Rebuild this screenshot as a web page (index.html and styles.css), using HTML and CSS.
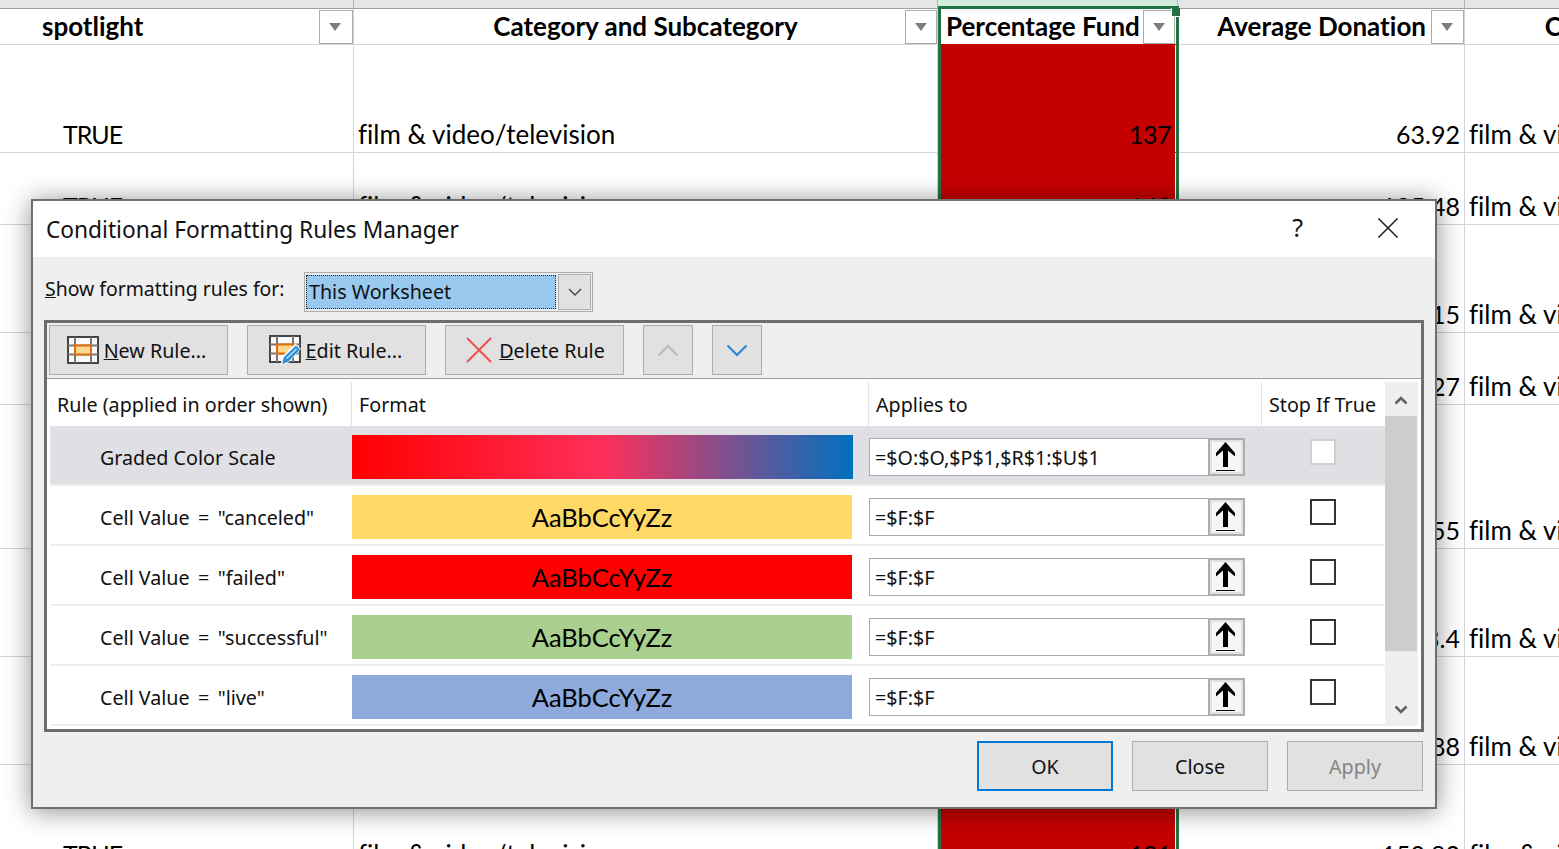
FILE: index.html
```html
<!DOCTYPE html>
<html lang="en">

<head>
    <meta charset="UTF-8">
    <title>Conditional Formatting Rules Manager</title>
    <link rel="stylesheet" href="styles.css">
</head>

<body>

    <!-- Hoja de fondo -->
    <div class="sheet">
        <div class="fila letras">
            <div class="celda"></div>
            <div class="celda"></div>
            <div class="celda letra-activa"></div>
            <div class="celda"></div>
            <div class="celda"></div>
        </div>
        <div class="fila cabecera">
            <div class="celda izq-spot">spotlight<span class="filtro"></span></div>
            <div class="celda centro">Category and Subcategory<span class="filtro filtro-cat"></span></div>
            <div class="celda izq-pct">Percentage Fund<span class="filtro filtro-pct"></span></div>
            <div class="celda der-avg">Average Donation<span class="filtro filtro-avg"></span></div>
            <div class="celda centro">Category</div>
        </div>
        <div class="fila h108">
            <div class="celda bool">TRUE</div><div class="celda texto">film &amp; video/television</div>
            <div class="celda pct">137</div><div class="celda num">63.92</div><div class="celda texto">film &amp; video</div>
        </div>
        <div class="fila h72">
            <div class="celda bool">TRUE</div><div class="celda texto">film &amp; video/television</div>
            <div class="celda pct">143</div><div class="celda num">185.48</div><div class="celda texto">film &amp; video</div>
        </div>
        <div class="fila h108">
            <div class="celda bool">TRUE</div><div class="celda texto">film &amp; video/television</div>
            <div class="celda pct">110</div><div class="celda num">15.15</div><div class="celda texto">film &amp; video</div>
        </div>
        <div class="fila h72">
            <div class="celda bool">TRUE</div><div class="celda texto">film &amp; video/television</div>
            <div class="celda pct">103</div><div class="celda num">66.27</div><div class="celda texto">film &amp; video</div>
        </div>
        <div class="fila h144">
            <div class="celda bool">TRUE</div><div class="celda texto">film &amp; video/television</div>
            <div class="celda pct">108</div><div class="celda num">47.55</div><div class="celda texto">film &amp; video</div>
        </div>
        <div class="fila h108">
            <div class="celda bool">TRUE</div><div class="celda texto">film &amp; video/television</div>
            <div class="celda pct">126</div><div class="celda num">73.4</div><div class="celda texto">film &amp; video</div>
        </div>
        <div class="fila h108">
            <div class="celda bool">TRUE</div><div class="celda texto">film &amp; video/television</div>
            <div class="celda pct">112</div><div class="celda num">95.88</div><div class="celda texto">film &amp; video</div>
        </div>
        <div class="fila h108">
            <div class="celda bool">TRUE</div><div class="celda texto">film &amp; video/television</div>
            <div class="celda pct">101</div><div class="celda num">150.82</div><div class="celda texto">film &amp; video</div>
        </div>
    </div>

    <!-- Columna seleccionada -->
    <div class="seleccion"><span class="tirador"></span></div>

    <!-- Dialogo -->
    <div class="dialogo">
        <div class="titulo">
            <span class="titulo-texto">Conditional Formatting Rules Manager</span>
            <span class="ayuda">?</span>
            <svg class="cerrar" width="22" height="22" viewBox="0 0 22 22"><path d="M1.5 1.5L20.5 20.5M20.5 1.5L1.5 20.5" stroke="#222" stroke-width="1.6" fill="none"/></svg>
        </div>

        <div class="opciones">
            <span class="etiqueta"><u>S</u>how formatting rules for:</span>
            <div class="combo">
                <div class="combo-valor">This Worksheet</div>
                <div class="combo-flecha">
                    <svg width="14" height="8" viewBox="0 0 14 8"><path d="M1 1L7 7L13 1" stroke="#444" stroke-width="1.4" fill="none"/></svg>
                </div>
            </div>
        </div>

        <div class="panel">
            <div class="barra">
                <button class="boton ancho nueva">
                    <svg width="32" height="28" viewBox="0 0 32 28">
                        <rect x="1" y="1" width="30" height="26" fill="#fafafa" stroke="#444" stroke-width="2"/>
                        <path d="M8 1V27M24 1V27M1 9.500H31M1 18.500H31" stroke="#777" stroke-width="2" fill="none"/>
                        <rect x="8" y="9.500" width="16" height="9" fill="#fbd98f" stroke="#e46c0a" stroke-width="2"/>
                    </svg>
                    <span><u>N</u>ew Rule...</span>
                </button>
                <button class="boton ancho">
                    <svg width="32" height="30" viewBox="0 0 32 30">
                        <rect x="1" y="1" width="30" height="26" fill="#fafafa" stroke="#444" stroke-width="2"/>
                        <path d="M8 1V27M24 1V27M1 9.500H31M1 18.500H31" stroke="#777" stroke-width="2" fill="none"/>
                        <rect x="8" y="9.500" width="16" height="9" fill="#fbd98f" stroke="#e46c0a" stroke-width="2"/>
                        <path d="M11.500 30L13.500 21L26.500 8.500L32 14L19.500 27.500Z" fill="#fff"/>
                        <path d="M13 29L15 22L27 10.500L31 14.500L19.500 26.500Z" fill="#2a8fd6"/>
                        <path d="M17.500 23.500L27.500 14" stroke="#bfe0f5" stroke-width="1.400"/>
                    </svg>
                    <span><u>E</u>dit Rule...</span>
                </button>
                <button class="boton ancho borrar">
                    <svg width="26" height="26" viewBox="0 0 26 26"><path d="M1 1L25 25M25 1L1 25" stroke="#ee4f4f" stroke-width="2" fill="none"/></svg>
                    <span><u>D</u>elete Rule</span>
                </button>
                <button class="boton corto">
                    <svg width="22" height="13" viewBox="0 0 22 13"><path d="M1.500 11.500L11 2L20.500 11.500" stroke="#bdbdbd" stroke-width="2.400" fill="none"/></svg>
                </button>
                <button class="boton corto">
                    <svg width="22" height="13" viewBox="0 0 22 13"><path d="M1.500 1.500L11 11L20.500 1.500" stroke="#2b88d8" stroke-width="2.200" fill="none"/></svg>
                </button>
            </div>

            <div class="tabla">
                <div class="lista">
                    <div class="encabezado">
                        <div class="col-rule">Rule (applied in order shown)</div>
                        <div class="col-sep">Format</div>
                        <div class="col-sep">Applies to</div>
                        <div class="col-sep">Stop If True</div>
                    </div>

                    <div class="regla activa">
                        <div class="regla-nombre">Graded Color Scale</div>
                        <div class="muestra grad"></div>
                        <div class="rango"><span class="rango-texto">=$O:$O,$P$1,$R$1:$U$1</span>
                            <span class="rango-boton"><svg width="19" height="29" viewBox="0 0 19 29"><path d="M9.500 0L19 11V14.500L12 8.500V25H7V8.500L0 14.500V11Z" fill="#000"/><rect y="28" width="19" height="1" fill="#000"/></svg></span>
                        </div>
                        <div class="marca marca-off"></div>
                    </div>
                    <div class="regla">
                        <div class="regla-nombre">Cell Value&#8201; = &#8201;"canceled"</div>
                        <div class="muestra amarillo">AaBbCcYyZz</div>
                        <div class="rango"><span class="rango-texto">=$F:$F</span>
                            <span class="rango-boton"><svg width="19" height="29" viewBox="0 0 19 29"><path d="M9.500 0L19 11V14.500L12 8.500V25H7V8.500L0 14.500V11Z" fill="#000"/><rect y="28" width="19" height="1" fill="#000"/></svg></span>
                        </div>
                        <div class="marca"></div>
                    </div>
                    <div class="regla">
                        <div class="regla-nombre">Cell Value&#8201; = &#8201;"failed"</div>
                        <div class="muestra rojo">AaBbCcYyZz</div>
                        <div class="rango"><span class="rango-texto">=$F:$F</span>
                            <span class="rango-boton"><svg width="19" height="29" viewBox="0 0 19 29"><path d="M9.500 0L19 11V14.500L12 8.500V25H7V8.500L0 14.500V11Z" fill="#000"/><rect y="28" width="19" height="1" fill="#000"/></svg></span>
                        </div>
                        <div class="marca"></div>
                    </div>
                    <div class="regla">
                        <div class="regla-nombre">Cell Value&#8201; = &#8201;"successful"</div>
                        <div class="muestra verde">AaBbCcYyZz</div>
                        <div class="rango"><span class="rango-texto">=$F:$F</span>
                            <span class="rango-boton"><svg width="19" height="29" viewBox="0 0 19 29"><path d="M9.500 0L19 11V14.500L12 8.500V25H7V8.500L0 14.500V11Z" fill="#000"/><rect y="28" width="19" height="1" fill="#000"/></svg></span>
                        </div>
                        <div class="marca"></div>
                    </div>
                    <div class="regla">
                        <div class="regla-nombre">Cell Value&#8201; = &#8201;"live"</div>
                        <div class="muestra azul">AaBbCcYyZz</div>
                        <div class="rango"><span class="rango-texto">=$F:$F</span>
                            <span class="rango-boton"><svg width="19" height="29" viewBox="0 0 19 29"><path d="M9.500 0L19 11V14.500L12 8.500V25H7V8.500L0 14.500V11Z" fill="#000"/><rect y="28" width="19" height="1" fill="#000"/></svg></span>
                        </div>
                        <div class="marca"></div>
                    </div>
                </div>

                <div class="scroll">
                    <div class="scroll-flecha">
                        <svg width="14" height="9" viewBox="0 0 14 9"><path d="M1.500 7.500L7 2L12.500 7.500" stroke="#606060" stroke-width="2.600" fill="none"/></svg>
                    </div>
                    <div class="scroll-pulgar"></div>
                    <div class="scroll-resto">
                        <svg width="14" height="9" viewBox="0 0 14 9"><path d="M1.500 1.500L7 7L12.500 1.500" stroke="#606060" stroke-width="2.600" fill="none"/></svg>
                    </div>
                </div>
            </div>
        </div>

        <div class="pie">
            <button class="boton pie-boton principal">OK</button>
            <button class="boton pie-boton">Close</button>
            <button class="boton pie-boton apagado">Apply</button>
        </div>
    </div>

</body>
</html>
```

FILE: styles.css
```css
body {
    margin: 0;
    height: 849px;
    overflow: hidden;
    background: #fff;
    position: relative;
    color: #000;
}

/* Hoja */
.sheet {
    width: 1731px;
    font-family: "Lato", sans-serif;
    font-size: 26px;
    font-variant-ligatures: none;
}

.fila {
    display: grid;
    grid-template-columns: 354px 584px 240px 287px 266px;
}

.celda {
    position: relative;
    box-sizing: border-box;
    border-right: 1px solid #d4d4d4;
    border-bottom: 1px solid #d4d4d4;
    display: flex;
    align-items: flex-end;
    padding-bottom: 3px;
    white-space: nowrap;
    overflow: hidden;
}

.letras {
    height: 9px;
}

.letras .celda {
    background: #e6e6e6;
    border-right-color: #b5b5b5;
    border-bottom-color: #9e9e9e;
    padding-bottom: 0;
}

.letras .letra-activa {
    background: #d2ecdd;
}

.cabecera {
    height: 36px;
    font-weight: 700;
}

.cabecera .celda {
    align-items: center;
    padding-bottom: 1px;
}

.h72 { height: 72px; }
.h108 { height: 108px; }
.h144 { height: 144px; }

.izq-spot { padding-left: 42px; }
.izq-pct { padding-left: 8px; }
.der-avg { justify-content: flex-end; padding-right: 38px; }
.centro { justify-content: center; }
.bool { padding-left: 63px; letter-spacing: -1px; font-size: 25px; }
.texto { padding: 0 0 2px 4px; }

.num {
    justify-content: flex-end;
    padding-right: 4px;
    font-size: 25px;
}

.pct {
    justify-content: flex-end;
    padding-right: 4px;
    font-size: 25px;
    letter-spacing: -0.5px;
    background: #c50000;
    border-bottom-color: #c50000;
    border-right: 3px solid #fff;
    box-shadow: 0 -1px 0 #c50000;
}

.filtro {
    position: absolute;
    right: 0;
    top: 1px;
    box-sizing: border-box;
    width: 34px;
    height: 34px;
    background: #fff;
    border: 1px solid #ababab;
}

.filtro-cat {
    width: 32px;
}

.filtro-avg {
    width: 33px;
}

.filtro-pct {
    right: 2px;
    width: 32px;
}

.filtro::after {
    content: "";
    position: absolute;
    left: 9px;
    top: 12px;
    border-left: 6px solid transparent;
    border-right: 6px solid transparent;
    border-top: 8px solid #7f7f7f;
}

/* Columna seleccionada */
.seleccion {
    position: absolute;
    left: 938px;
    top: 6px;
    width: 241px;
    height: 860px;
    box-sizing: border-box;
    border: 3px solid #217346;
    border-bottom: none;
}

.tirador {
    position: absolute;
    right: -4px;
    top: -1px;
    width: 9px;
    height: 9px;
    background: #217346;
    border-left: 1px solid #fff;
    border-bottom: 1px solid #fff;
    box-sizing: border-box;
}

/* Dialogo */
.dialogo {
    position: absolute;
    left: 31px;
    top: 199px;
    width: 1406px;
    height: 610px;
    box-sizing: border-box;
    background: #efefef;
    border: 2px solid #6f6f6f;
    box-shadow: 0 2px 24px rgba(0, 0, 0, 0.45);
    font-family: "Noto Sans", sans-serif;
    font-size: 19.7px;
    color: #111;
    display: flex;
    flex-direction: column;
}

.titulo {
    height: 56px;
    background: #fff;
    display: flex;
    align-items: center;
    padding-left: 13px;
    flex-shrink: 0;
}

.titulo-texto {
    font-size: 22.7px;
    flex: 1;
}

.ayuda {
    font-size: 25px;
    margin-right: 74px;
    margin-top: -4px;
}

.cerrar {
    margin-right: 36px;
    margin-top: -3px;
}

.opciones {
    height: 63px;
    display: flex;
    align-items: flex-start;
    padding-left: 12px;
    box-sizing: border-box;
    flex-shrink: 0;
}

.etiqueta {
    margin-top: 18px;
    width: 259px;
    font-size: 19.4px;
    white-space: nowrap;
}

.combo {
    margin-top: 15px;
    width: 289px;
    height: 40px;
    box-sizing: border-box;
    border: 1px solid #adadad;
    padding: 1px;
    display: flex;
    gap: 2px;
}

.combo-valor {
    width: 250px;
    box-sizing: border-box;
    background: #99c9ef;
    border: 1px dotted #222;
    padding: 2px 0 0 2px;
    margin: 1px 0;
}

.combo-flecha {
    flex: 1;
    box-sizing: border-box;
    background: #e1e1e1;
    border: 1px solid #adadad;
    display: flex;
    align-items: center;
    justify-content: center;
}

.panel {
    margin-left: 11px;
    width: 1380px;
    height: 412px;
    box-sizing: border-box;
    border: 3px solid #6d6d6d;
    flex-shrink: 0;
    display: flex;
    flex-direction: column;
}

.barra {
    height: 56px;
    box-sizing: border-box;
    border-bottom: 1px solid #a0a0a0;
    padding: 2px 0 0 2px;
    display: flex;
    align-items: flex-start;
    gap: 19px;
}

.boton {
    box-sizing: border-box;
    height: 50px;
    padding: 0;
    background: #e1e1e1;
    border: 1px solid #adadad;
    font-family: inherit;
    font-size: inherit;
    color: inherit;
    display: flex;
    align-items: center;
    justify-content: center;
}

.ancho {
    width: 179px;
    gap: 5px;
    padding-right: 2px;
}

.nueva {
    padding-right: 4px;
}

.borrar {
    gap: 7px;
    padding: 0 0 0 2px;
}

.corto {
    width: 50px;
}

.tabla {
    flex: 1;
    background: #fff;
    display: flex;
    padding-left: 3px;
}

.lista {
    width: 1335px;
    height: 347px;
    overflow: hidden;
}

.encabezado {
    display: grid;
    grid-template-columns: 301px 517px 393px 124px;
    height: 44px;
    margin-top: 3px;
}

.encabezado div {
    display: flex;
    align-items: center;
    padding-left: 7px;
    white-space: nowrap;
}

.col-sep {
    border-left: 1px solid #e4e4e4;
}

.regla {
    display: grid;
    grid-template-columns: 301px 517px 393px 124px;
    height: 60px;
    box-sizing: border-box;
    border-bottom: 2px solid #efefef;
    align-items: start;
}

.activa {
    background: #dfdfe4;
}

.regla-nombre {
    padding-left: 50px;
    margin-top: 18px;
    white-space: nowrap;
}

.muestra {
    margin: 9px 0 0 1px;
    width: 500px;
    height: 44px;
    font-family: "Lato", sans-serif;
    font-size: 25.5px;
    color: #000;
    display: flex;
    align-items: center;
    justify-content: center;
}

.grad {
    width: 501px;
    background: linear-gradient(to right, #ff0000 0%, #ff2f5a 50%, #0070c0 100%);
}

.amarillo { background: #ffd966; }
.rojo { background: #ff0000; }
.verde { background: #a9d08e; }
.azul { background: #8ea9db; }

.rango {
    margin: 12px 0 0 1px;
    width: 376px;
    height: 38px;
    box-sizing: border-box;
    background: #fff;
    border: 1px solid #a9a9b0;
    display: flex;
    align-items: center;
    justify-content: space-between;
    padding-left: 5px;
}

.rango-boton {
    width: 37px;
    height: 38px;
    margin-right: -1px;
    padding: 0 2px 2px 0;
    box-sizing: border-box;
    background: #f6f6f6;
    border: 2px solid #adadad;
    box-shadow: inset 0 0 0 2px #e2e2e2;
    display: flex;
    align-items: center;
    justify-content: center;
}

.marca {
    margin: 13px 0 0 49px;
    width: 26px;
    height: 26px;
    box-sizing: border-box;
    background: #fff;
    border: 2px solid #333;
}

.marca-off {
    border-color: #cfcfcf;
}

.scroll {
    width: 33px;
    height: 344px;
    margin-top: 3px;
    background: #efefef;
    display: flex;
    flex-direction: column;
}

.scroll-flecha {
    height: 34px;
    box-sizing: border-box;
    padding: 3px 2px 0 0;
    display: flex;
    align-items: center;
    justify-content: center;
}

.scroll-pulgar {
    height: 235px;
    margin-right: 1px;
    background: #cdcdcd;
}

.scroll-resto {
    flex: 1;
    display: flex;
    align-items: flex-end;
    justify-content: center;
    padding: 0 2px 12px 0;
}

.pie {
    display: flex;
    justify-content: flex-end;
    gap: 19px;
    padding: 9px 12px 0 0;
}

.pie-boton {
    width: 136px;
}

.principal {
    border: 2px solid #0078d7;
}

.apagado {
    color: #858585;
}
```
